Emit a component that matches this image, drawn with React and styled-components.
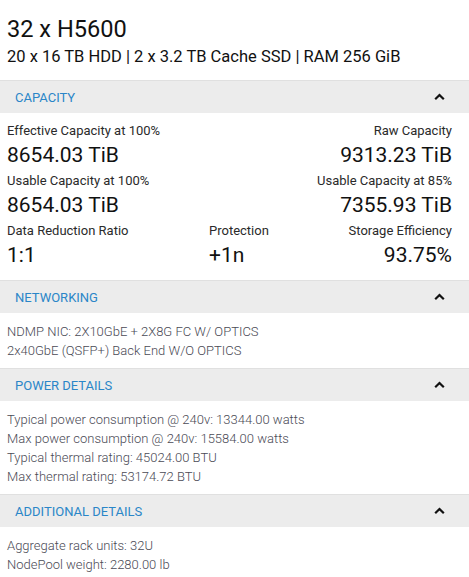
import React from "react";
import styled, { createGlobalStyle } from "styled-components";

const Global = createGlobalStyle`
  html, body { margin: 0; padding: 0; background: #fff; }
  body { font-family: Roboto, "Noto Sans", Arial, sans-serif; color: #111; }
  * { box-sizing: border-box; }
`;

const Page = styled.div`
  width: 469px;
  display: flex;
  flex-direction: column;
`;

const Head = styled.div`
  padding: 14px 7px 12px;
  display: flex;
  flex-direction: column;
  gap: 2px;
`;

const Title = styled.div`
  font-size: 23.6px;
  line-height: 30px;
  color: #111;
`;

const Subtitle = styled.div`
  font-size: 16.5px;
  line-height: 22px;
  color: #111;
`;

const SectionHeader = styled.div`
  height: 33px;
  background: #ececec;
  border-top: 1px solid #e0e0e0;
  display: flex;
  align-items: center;
  justify-content: space-between;
  padding: 0 24px 0 15px;
`;

const SectionLabel = styled.span`
  font-size: 13px;
  color: #2a86c8;
  text-transform: uppercase;
`;

const Chevron = () => (
  <svg width="11" height="8" viewBox="0 0 11 8">
    <path d="M1.2 6.3 L5.5 2 L9.8 6.3" fill="none" stroke="#111" strokeWidth="2.2" />
  </svg>
);

const CapGrid = styled.div`
  display: grid;
  grid-template-columns: 202px 1fr auto;
  padding: 8px 17px 9px 7px;
`;

const Cell = styled.div`
  display: flex;
  flex-direction: column;
  align-items: ${(p) => (p.$right ? "flex-end" : "flex-start")};
  grid-column: ${(p) => p.$col || "auto"};
  white-space: nowrap;
`;

const Label = styled.div`
  font-size: 13px;
  line-height: 19px;
  color: #2a2a2a;
`;

const Value = styled.div`
  font-size: 21px;
  line-height: 31px;
  color: #111;
`;

const Body = styled.div`
  padding: 9px 7px 8px;
  display: flex;
  flex-direction: column;
`;

const Line = styled.div`
  font-size: 13px;
  line-height: 19px;
  font-weight: 300;
  color: #4a4a55;
`;

const Section = ({ title, children }) => (
  <>
    <SectionHeader>
      <SectionLabel>{title}</SectionLabel>
      <Chevron />
    </SectionHeader>
    {children}
  </>
);

export default function App() {
  return (
    <Page>
      <Global />
      <Head>
        <Title>32 x H5600</Title>
        <Subtitle>20 x 16 TB HDD | 2 x 3.2 TB Cache SSD | RAM 256 GiB</Subtitle>
      </Head>
      <Section title="Capacity">
        <CapGrid>
          <Cell $col="1">
            <Label>Effective Capacity at 100%</Label>
            <Value>8654.03 TiB</Value>
          </Cell>
          <Cell $col="3" $right>
            <Label>Raw Capacity</Label>
            <Value>9313.23 TiB</Value>
          </Cell>
          <Cell $col="1">
            <Label>Usable Capacity at 100%</Label>
            <Value>8654.03 TiB</Value>
          </Cell>
          <Cell $col="3" $right>
            <Label>Usable Capacity at 85%</Label>
            <Value>7355.93 TiB</Value>
          </Cell>
          <Cell $col="1">
            <Label>Data Reduction Ratio</Label>
            <Value>1:1</Value>
          </Cell>
          <Cell $col="2">
            <Label>Protection</Label>
            <Value>+1n</Value>
          </Cell>
          <Cell $col="3" $right>
            <Label>Storage Efficiency</Label>
            <Value>93.75%</Value>
          </Cell>
        </CapGrid>
      </Section>
      <Section title="Networking">
        <Body>
          <Line>NDMP NIC: 2X10GbE + 2X8G FC W/ OPTICS</Line>
          <Line>2x40GbE (QSFP+) Back End W/O OPTICS</Line>
        </Body>
      </Section>
      <Section title="Power Details">
        <Body>
          <Line>Typical power consumption @ 240v: 13344.00 watts</Line>
          <Line>Max power consumption @ 240v: 15584.00 watts</Line>
          <Line>Typical thermal rating: 45024.00 BTU</Line>
          <Line>Max thermal rating: 53174.72 BTU</Line>
        </Body>
      </Section>
      <Section title="Additional Details">
        <Body>
          <Line>Aggregate rack units: 32U</Line>
          <Line>NodePool weight: 2280.00 lb</Line>
        </Body>
      </Section>
    </Page>
  );
}
